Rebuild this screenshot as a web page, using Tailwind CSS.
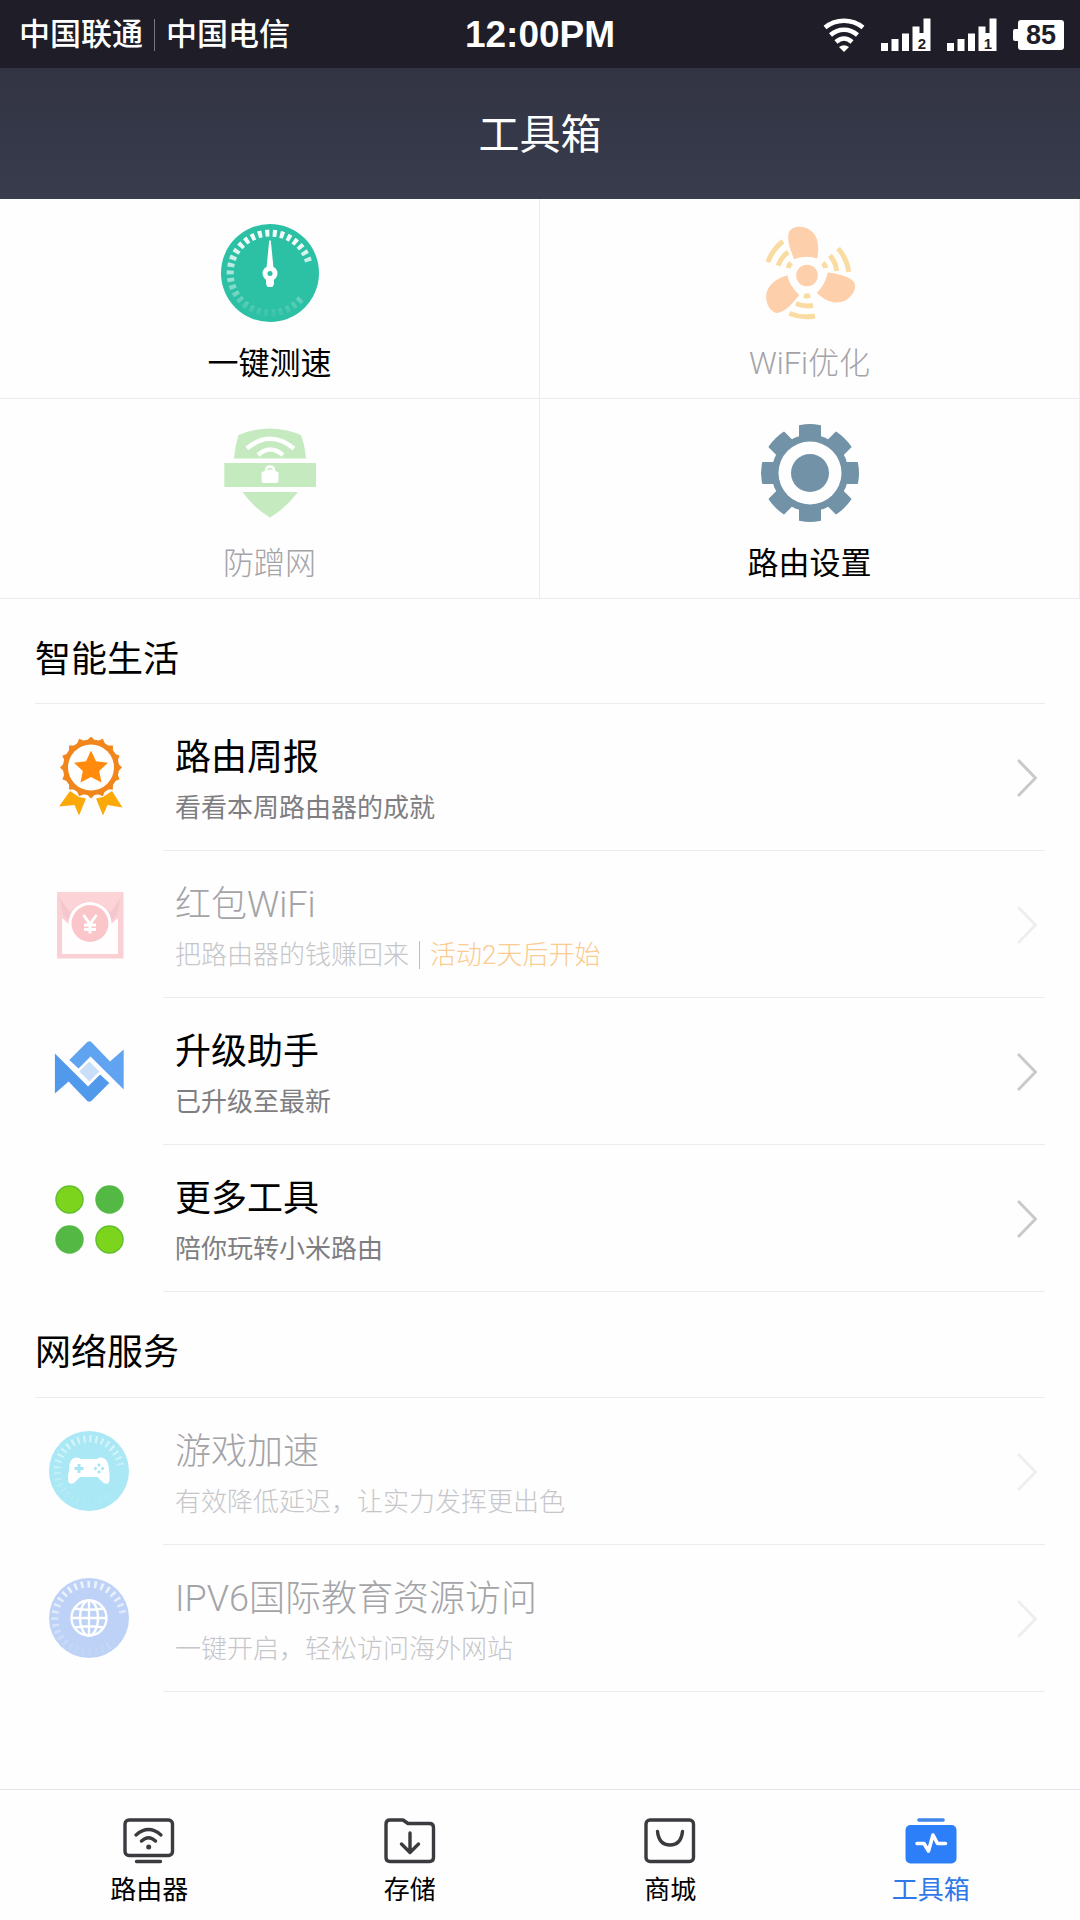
<!DOCTYPE html>
<html lang="zh-CN">
<head>
<meta charset="utf-8">
<meta name="viewport" content="width=device-width, initial-scale=1">
<title>工具箱</title>
<script src="https://cdn.jsdelivr.net/npm/@tailwindcss/browser@4"></script>
</head>
<body class="flex min-h-screen flex-col bg-[#fefefe] font-['Roboto','Noto_Sans_CJK_SC',sans-serif] text-black">

<!-- Status bar -->
<div class="grid h-[68px] grid-cols-[1fr_auto_1fr] items-center bg-[#1e1d28] px-4 pt-0.5 text-white">
  <div class="flex items-center gap-[11px] pl-[3px] text-[31px] leading-10 font-medium">
    <span>中国联通</span>
    <span class="h-8 w-px bg-[#777780]"></span>
    <span>中国电信</span>
  </div>
  <time class="font-['Liberation_Sans',sans-serif] text-[37px] leading-10 font-bold">12:00PM</time>
  <div class="flex items-center justify-end gap-4">
    <svg class="h-[34px] w-[42px]" viewBox="0 0 42 34" fill="none" stroke="#fff" stroke-width="4.6" aria-label="WiFi">
      <path d="M2 9.500C13 .5 29 .5 40 9.500M7.500 17C15.500 10 26.500 10 34.500 17M13 24C18 19.500 24 19.500 29 24"/>
      <path d="M21 34l-5-5q5-3.500 10 0z" fill="#fff" stroke="none"/>
    </svg>
    <svg class="h-[34px] w-[50px]" viewBox="0 0 50 34" fill="#fff" aria-label="SIM 2">
      <path d="M0 25h7v8H0zM10.500 21h7v12h-7zM21 15.500h7V33h-7zM31.500 8.500h7V15h4V.5h7V33h-18z"/>
      <text x="41" y="30.500" font-family="Liberation Sans" font-size="15" font-weight="bold" fill="#1e1d28" text-anchor="middle">2</text>
    </svg>
    <svg class="h-[34px] w-[50px]" viewBox="0 0 50 34" fill="#fff" aria-label="SIM 1">
      <path d="M0 25h7v8H0zM10.500 21h7v12h-7zM21 15.500h7V33h-7zM31.500 8.500h7V15h4V.5h7V33h-18z"/>
      <text x="41" y="30.500" font-family="Liberation Sans" font-size="15" font-weight="bold" fill="#1e1d28" text-anchor="middle">1</text>
    </svg>
    <div class="flex items-center">
      <span class="h-3 w-[5px] rounded-l-xs bg-white"></span>
      <span class="flex h-[30px] w-[46px] items-center justify-center rounded-[3px] bg-white font-['Liberation_Sans',sans-serif] text-[27px] leading-[30px] font-bold text-[#1e1d28]">85</span>
    </div>
  </div>
</div>

<!-- Title bar -->
<header class="flex h-[131px] items-center justify-center bg-linear-to-b from-[#323443] to-[#383c4d] pt-0.5">
  <h1 class="text-[41px] leading-[56px] text-white">工具箱</h1>
</header>

<main>
  <!-- Main tools -->
  <div class="grid grid-cols-2 text-[31px] leading-11">
    <button class="flex h-[200px] flex-col items-center border-r border-b border-[#ececf0] pt-[25px]">
      <svg class="size-[98px]" viewBox="0 0 98 98" fill="none">
        <defs><linearGradient id="fade" x1="0" y1="0" x2="0" y2="1"><stop offset=".1" stop-color="#fff" stop-opacity=".95"/><stop offset=".5" stop-color="#fff" stop-opacity=".6"/><stop offset="1" stop-color="#fff" stop-opacity=".08"/></linearGradient></defs>
        <circle cx="49" cy="49" r="49" fill="#2cc0a4"/>
        <path d="M87.500 37.500A40 40 0 1 0 82 72" stroke="url(#fade)" stroke-width="7" stroke-dasharray="4 3.400"/>
        <path d="M48.200 16.500h1.600L52.500 44h-7zM45 54h8v6l-1.500 3h-5L45 60z" fill="#fff"/>
        <circle cx="49" cy="49.500" r="7.500" fill="#fff"/><circle cx="49" cy="49.500" r="2.500" fill="#2cc0a4"/>
      </svg>
      <span class="mt-5">一键测速</span>
    </button>
    <button class="flex h-[200px] flex-col items-center border-r border-b border-[#ececf0] pt-[25px]" disabled>
      <svg class="size-[98px]" viewBox="0 0 98 98" fill="none">
        <defs>
          <g id="blade">
            <path d="M33 35C29 25 25 14 28.500 7C32 1.500 42 1.500 49 6C58 12 58.500 25 56 34.500Q46 31 33 35z" fill="#fdd0ab"/>
            <path d="M28.300 89.500Q41 94.500 54 92M35 79.500Q43 83 52 81.500M43 71.500Q46 72.500 49 71.500" stroke="#fadca2" stroke-width="5"/>
          </g>
        </defs>
        <circle cx="46" cy="51.500" r="10.800" fill="#fdd0ab"/>
        <use href="#blade"/><use href="#blade" transform="rotate(120 46 51.500)"/><use href="#blade" transform="rotate(240 46 51.500)"/>
      </svg>
      <span class="mt-5 font-light text-[#a4a4a8]">WiFi优化</span>
    </button>
    <button class="flex h-[200px] flex-col items-center border-r border-b border-[#ececf0] pt-[25px]" disabled>
      <svg class="size-[98px]" viewBox="0 0 98 98" fill="none">
        <path d="M13 34.500Q14 22 17.500 11Q33 4.500 49 4.500T80 11Q84 22 85 34.500zM3.300 39H95v24H3.300zM21.500 68H77Q65 84 49 93.500Q33 84 21.500 68z" fill="#c5eac0"/>
        <path d="M26 24.500Q49 5 73 24.500M37 31Q49 20 62 31" stroke="#fff" stroke-width="4.500"/>
        <path d="M40.500 48.500q8.500-6 17 0v8q0 2.500-2.500 2.500H43q-2.500 0-2.500-2.500z" fill="#fff"/>
        <path d="M45 47q0-4.500 4-4.500t4 4.500" stroke="#fff" stroke-width="2.500"/>
      </svg>
      <span class="mt-5 font-light text-[#a4a4a8]">防蹭网</span>
    </button>
    <button class="flex h-[200px] flex-col items-center border-r border-b border-[#ececf0] pt-[25px]">
      <svg class="size-[98px]" viewBox="0 0 98 98">
        <defs>
          <clipPath id="rim"><circle cx="49" cy="49" r="49"/></clipPath>
          <mask id="hole"><path d="M0 0h98v98H0z" fill="#fff"/><circle cx="49" cy="49" r="31.500"/><circle cx="49" cy="49" r="19" fill="#fff"/></mask>
          <path id="teeth" d="M38 0h22v98H38z"/>
        </defs>
        <g clip-path="url(#rim)"><g mask="url(#hole)" fill="#7192a7">
          <circle cx="49" cy="49" r="38.500"/>
          <use href="#teeth"/><use href="#teeth" transform="rotate(45 49 49)"/><use href="#teeth" transform="rotate(90 49 49)"/><use href="#teeth" transform="rotate(135 49 49)"/>
        </g></g>
      </svg>
      <span class="mt-5">路由设置</span>
    </button>
  </div>

  <!-- Smart living -->
  <section class="px-[35px]">
    <h2 class="border-b border-[#ececf0] pt-[33px] pb-[15px] text-[36px] leading-[56px]">智能生活</h2>
    <ul>
      <li><a href="#weekly" class="flex">
        <span class="flex w-32 shrink-0 items-center pb-0.5 pl-[15px]">
          <svg class="size-20" viewBox="0 0 80 80">
            <defs><path id="petal" d="M41-.5l31 31-31 31-31-31z"/></defs>
            <g fill="#f0861c">
              <circle cx="41" cy="30.500" r="28"/>
              <use href="#petal"/><use href="#petal" transform="rotate(22.500 41 30.500)"/><use href="#petal" transform="rotate(45 41 30.500)"/><use href="#petal" transform="rotate(67.500 41 30.500)"/>
            </g>
            <circle cx="41" cy="30.500" r="23" fill="#fff"/>
            <path d="M41 13.500l5 10.800 12 1.500-8.800 8.200 2.300 11.600L41 40l-10.500 5.600L32.800 34 24 25.800l12-1.500z" fill="#ff8a0c"/>
            <path d="M20 54l9 6 7 1.500-7 17-4.500-10.500-15.500 1.500zM62 54l-9 6-7 1.500 7 17 4.500-10.500 15 2.500z" fill="#faa908"/>
          </svg>
        </span>
        <span class="flex grow items-center justify-between border-b border-[#ececf0] pt-[26px] pr-2 pb-5 pl-3">
          <span class="flex flex-col"><span class="text-[36px] leading-[56px]">路由周报</span><span class="text-[26px] leading-11 text-[#7e7e82]">看看本周路由器的成就</span></span>
          <svg class="mb-1 h-10 w-5" viewBox="0 0 20 40" fill="none" stroke="#c9c9cb" stroke-width="3"><path d="M1 2l17.500 18L1 38"/></svg>
        </span>
      </a></li>
      <li><a href="#hongbao" class="flex" aria-disabled="true">
        <span class="flex w-32 shrink-0 items-center pb-0.5 pl-[15px]">
          <svg class="size-20" viewBox="0 0 80 80">
            <path d="M7 8h66.500v66.500H7z" fill="#fad0d4"/>
            <path d="M12 34l10 9h36l10-9v36H12z" fill="#fffdfd"/>
            <path d="M9 10l13 18q6-8 18-8t18 8l13-18-4 20-5 6H18l-5-6z" fill="#f4c6cd"/>
            <path d="M7 8h66.500q-6 12-13 20Q53 17.500 40 17.500T20 28Q13 20 7 8z" fill="#fcd3d6"/>
            <circle cx="40" cy="39.500" r="21.500" fill="#fff"/><circle cx="40" cy="39.500" r="18.500" fill="#fbc6c9"/>
            <path d="M33.500 31l6.500 9 6.500-9M40 40v9.500M34 41h12M34 45.500h12" fill="none" stroke="#fff" stroke-width="2.800"/>
          </svg>
        </span>
        <span class="flex grow items-center justify-between border-b border-[#ececf0] pt-[26px] pr-2 pb-5 pl-3">
          <span class="flex flex-col font-light"><span class="text-[36px] leading-[56px] text-[#a4a4a8]">红包WiFi</span>
            <span class="flex items-center text-[26px] leading-11 text-[#c6c6ca]">把路由器的钱赚回来<span class="mx-2.5 h-7 w-px bg-[#bcbcc0]"></span><span class="text-[#fbcb90]">活动2天后开始</span></span></span>
          <svg class="mb-1 h-10 w-5" viewBox="0 0 20 40" fill="none" stroke="#efedf1" stroke-width="3"><path d="M1 2l17.500 18L1 38"/></svg>
        </span>
      </a></li>
      <li><a href="#upgrade" class="flex">
        <span class="flex w-32 shrink-0 items-center pb-0.5 pl-[15px]">
          <svg class="size-20" viewBox="0 0 80 80">
            <path d="M37.300 11q2-1.600 4 0L60 30.500l13.700-12v40L40.500 25.500 28.500 37.500 19.300 29z" fill="#60a4f1"/>
            <path d="M37.300 11q2-1.600 4 0L60 30.500l13.700-12v40L40.500 25.500 28.500 37.500 19.300 29z" fill="#5199ea" transform="rotate(180 39.300 40.500)"/>
            <path d="M39.300 30.500l10 10-10 10-10-10z" fill="#c9def9"/>
          </svg>
        </span>
        <span class="flex grow items-center justify-between border-b border-[#ececf0] pt-[26px] pr-2 pb-5 pl-3">
          <span class="flex flex-col"><span class="text-[36px] leading-[56px]">升级助手</span><span class="text-[26px] leading-11 text-[#7e7e82]">已升级至最新</span></span>
          <svg class="mb-1 h-10 w-5" viewBox="0 0 20 40" fill="none" stroke="#c9c9cb" stroke-width="3"><path d="M1 2l17.500 18L1 38"/></svg>
        </span>
      </a></li>
      <li><a href="#more" class="flex">
        <span class="flex w-32 shrink-0 items-center pb-0.5 pl-[15px]">
          <svg class="size-20" viewBox="0 0 80 80">
            <circle cx="59.500" cy="21.500" r="14.200" fill="#54b944"/><circle cx="19.500" cy="61.500" r="14.200" fill="#54b944"/>
            <circle cx="19.500" cy="21.500" r="13.500" fill="#7dd41d" stroke="#5fbf2c" stroke-width="1.500"/><circle cx="59.500" cy="61.500" r="13.500" fill="#7dd41d" stroke="#5fbf2c" stroke-width="1.500"/>
          </svg>
        </span>
        <span class="flex grow items-center justify-between border-b border-[#ececf0] pt-[26px] pr-2 pb-5 pl-3">
          <span class="flex flex-col"><span class="text-[36px] leading-[56px]">更多工具</span><span class="text-[26px] leading-11 text-[#7e7e82]">陪你玩转小米路由</span></span>
          <svg class="mb-1 h-10 w-5" viewBox="0 0 20 40" fill="none" stroke="#c9c9cb" stroke-width="3"><path d="M1 2l17.500 18L1 38"/></svg>
        </span>
      </a></li>
    </ul>
  </section>

  <!-- Network services -->
  <section class="px-[35px]">
    <h2 class="border-b border-[#ececf0] pt-[33px] pb-4 text-[36px] leading-[56px]">网络服务</h2>
    <ul class="font-light">
      <li><a href="#game" class="flex" aria-disabled="true">
        <span class="flex w-32 shrink-0 items-center pb-0.5 pl-3.5">
          <svg class="size-20" viewBox="0 0 80 80" fill="none">
            <circle cx="40" cy="40" r="40" fill="#a9e8f4"/>
            <path d="M71.500 34A32 32 0 1 0 62 63" stroke="url(#fade)" stroke-opacity=".6" stroke-width="7" stroke-dasharray="2 4"/>
            <path d="M25 27q4-1.500 6.500 1h16q3-2.500 7-1 5 2 5.500 12 1.500 10-.5 13-4 2-7-2l-4-4H31l-4 4q-3 4-7 2-2-3 0-13 0-10 5-12z" fill="#fff"/>
            <path d="M30 33v9M25.500 37.500h9" stroke="#a9e5f2" stroke-width="3"/>
            <path d="M50 32l2 2-2 2-2-2zM50 39l2 2-2 2-2-2zM46.500 35.500l2 2-2 2-2-2zM53.500 35.500l2 2-2 2-2-2z" fill="#a9e5f2"/>
          </svg>
        </span>
        <span class="flex grow items-center justify-between border-b border-[#ececf0] pt-[26px] pr-2 pb-5 pl-3">
          <span class="flex flex-col"><span class="text-[36px] leading-[56px] text-[#a4a4a8]">游戏加速</span><span class="text-[26px] leading-11 text-[#c6c6ca]">有效降低延迟，让实力发挥更出色</span></span>
          <svg class="mb-1 h-10 w-5" viewBox="0 0 20 40" fill="none" stroke="#efedf1" stroke-width="3"><path d="M1 2l17.500 18L1 38"/></svg>
        </span>
      </a></li>
      <li><a href="#ipv6" class="flex" aria-disabled="true">
        <span class="flex w-32 shrink-0 items-center pb-0.5 pl-3.5">
          <svg class="size-20" viewBox="0 0 80 80" fill="none">
            <circle cx="40" cy="40" r="40" fill="#bdd2f6"/>
            <path d="M73.500 35A34 34 0 1 0 62 66" stroke="url(#fade)" stroke-opacity=".75" stroke-width="7" stroke-dasharray="2.600 4.100"/>
            <g stroke="#fff" stroke-width="2.300"><circle cx="40" cy="40" r="17.500"/><ellipse cx="40" cy="40" rx="9" ry="17.500"/><path d="M40 22.500v35M22.500 40h35M26 30.500q14 2.500 28 0M26 49.500q14-2.500 28 0"/></g>
          </svg>
        </span>
        <span class="flex grow items-center justify-between border-b border-[#ececf0] pt-[26px] pr-2 pb-5 pl-3">
          <span class="flex flex-col"><span class="text-[36px] leading-[56px] text-[#a4a4a8]">IPV6国际教育资源访问</span><span class="text-[26px] leading-11 text-[#c6c6ca]">一键开启，轻松访问海外网站</span></span>
          <svg class="mb-1 h-10 w-5" viewBox="0 0 20 40" fill="none" stroke="#efedf1" stroke-width="3"><path d="M1 2l17.500 18L1 38"/></svg>
        </span>
      </a></li>
    </ul>
  </section>
</main>

<!-- Tab bar -->
<nav class="mt-auto grid h-[131px] grid-cols-4 border-t border-[#e4e3ea] px-[19px] pt-7 text-[26px] leading-9">
  <a href="#router" class="flex flex-col items-center gap-2">
    <svg class="h-[46px] w-[52px]" viewBox="0 0 52 46" fill="none" stroke="#3a3a3f" stroke-width="3.400" stroke-linecap="round">
      <rect x="2" y="2" width="47.500" height="35.500" rx="4"/><path d="M13.500 43.500h24M13 17q12.500-11 25 0M18.500 23q7-6.500 14 0"/><circle cx="25.700" cy="29" r="2.500" fill="#3a3a3f" stroke="none"/>
    </svg>
    <span>路由器</span>
  </a>
  <a href="#storage" class="flex flex-col items-center gap-2">
    <svg class="h-[46px] w-[52px]" viewBox="0 0 52 46" fill="none" stroke="#3a3a3f" stroke-width="3.400" stroke-linecap="round" stroke-linejoin="round">
      <path d="M6 2h13l5 3.500h21.500q4 0 4 4v30q0 4-4 4H6q-4 0-4-4V6q0-4 4-4zM26 15v19M17.500 26l8.500 8.500 8.500-8.500"/>
    </svg>
    <span>存储</span>
  </a>
  <a href="#shop" class="flex flex-col items-center gap-2">
    <svg class="h-[46px] w-[52px]" viewBox="0 0 52 46" fill="none" stroke="#3a3a3f" stroke-width="3.400" stroke-linecap="round">
      <rect x="2" y="2" width="47.500" height="41.500" rx="4"/><path d="M13.500 13.500q1.500 13.500 12.500 13.500t12.500-13.500"/>
    </svg>
    <span>商城</span>
  </a>
  <a href="#toolbox" class="flex flex-col items-center gap-2 text-[#2f78ea]" aria-current="page">
    <svg class="h-[46px] w-[52px]" viewBox="0 0 52 46" fill="none" stroke-linecap="round" stroke-linejoin="round">
      <path d="M14 2h24" stroke="#3f86ea" stroke-width="3.600"/>
      <rect x=".5" y="7" width="51" height="38.500" rx="5" fill="#2d7ff9"/>
      <path d="M12 25.500h7l4.500 7.500 4.500-16 4.500 8.500h8" stroke="#fff" stroke-width="3.600"/>
    </svg>
    <span>工具箱</span>
  </a>
</nav>
</body>
</html>
